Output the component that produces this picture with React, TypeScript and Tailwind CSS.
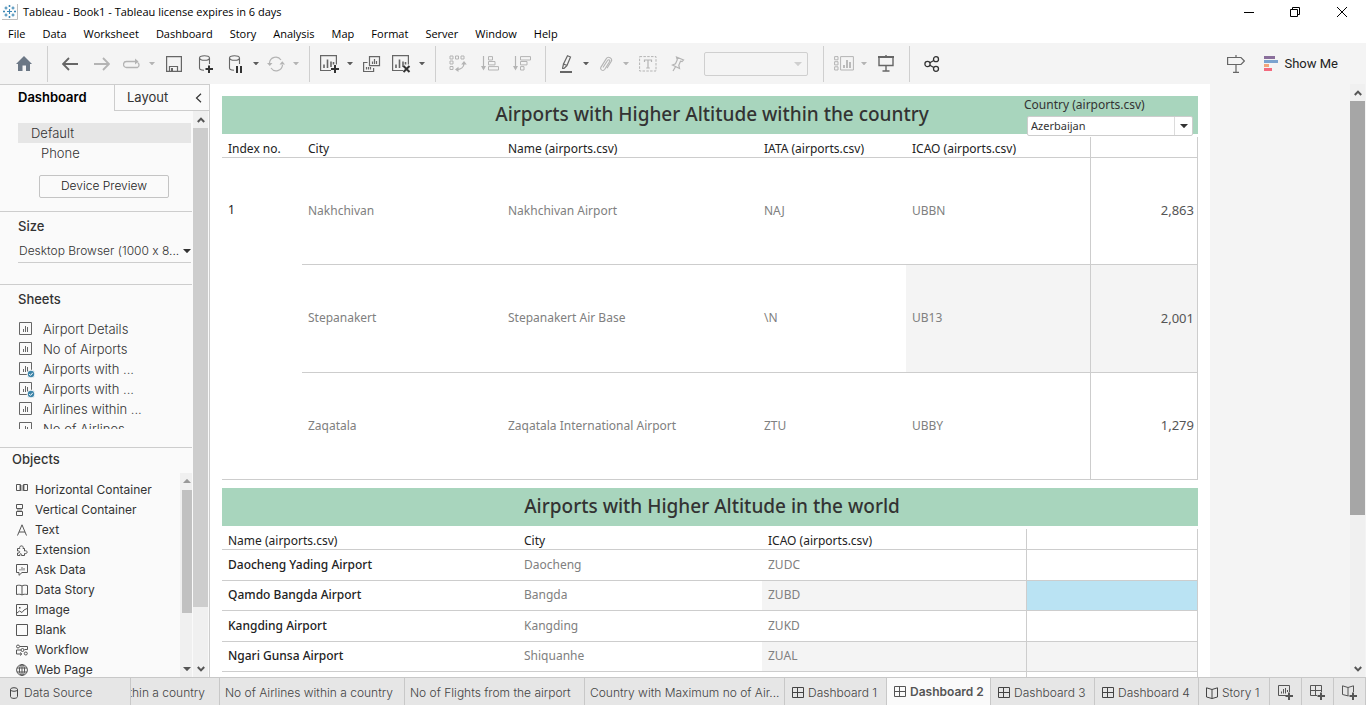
import React from "react";

const UI = "font-['Open_Sans','Noto_Sans',sans-serif]";

type IconProps = {
  w: number;
  h: number;
  children: React.ReactNode;
  className?: string;
};

function Svg({ w, h, children, className = "" }: IconProps) {
  return (
    <svg
      width={w}
      height={h}
      viewBox={`0 0 ${w} ${h}`}
      fill="none"
      stroke="currentColor"
      strokeWidth="1"
      aria-hidden="true"
      className={`shrink-0 ${className}`}
    >
      {children}
    </svg>
  );
}

/* ---------- small glyphs ---------- */

const Caret = () => (
  <Svg w={6} h={3}>
    <path d="M0 0h6L3 3.4z" fill="currentColor" stroke="none" />
  </Svg>
);

const WideCaret = () => (
  <Svg w={8} h={4}>
    <path d="M0 0h8L4 4.2z" fill="currentColor" stroke="none" />
  </Svg>
);

const Chevron = ({ down = false }: { down?: boolean }) => (
  <Svg w={8} h={6} className={down ? "rotate-180" : ""}>
    <path d="M.8 5 4 1.6 7.2 5" strokeWidth="2" />
  </Svg>
);

const TableauLogo = () => (
  <Svg w={16} h={16} className="text-[#3b87b5]">
    <path d="M0 0h16v16H0z" fill="#fdfdfd" stroke="none" />
    <path d="M15.5 0v15.5H0" stroke="#bdbdbd" />
    <path
      d="M7.5 5v5M5 7.5h5M4 2.5v3M2.5 4h3M11 2.5v3M9.5 4h3M4 9.5v3M2.5 11h3M11 9.5v3M9.5 11h3M7.5 1v2M6.5 2h2M7.5 12v2M6.5 13h2M1 7.5h2M2 6.5v2M12 7.5h2M13 6.5v2"
      strokeWidth="1.1"
    />
  </Svg>
);

const Home = () => (
  <Svg w={16} h={15} className="text-[#6b7785]">
    <path d="M8 0l8 8h-2v7h-4V9.500H6.500V15H2V8H0z" fill="currentColor" stroke="none" />
  </Svg>
);

const Arrow = ({ flip = false }: { flip?: boolean }) => (
  <Svg w={16} h={14} className={flip ? "-scale-x-100" : ""}>
    <path d="M1 7h15M7 1 1 7l6 6" strokeWidth="1.800" />
  </Svg>
);

const Replay = () => (
  <Svg w={18} h={12}>
    <path d="M9 9.500H3.500A2.800 2.800 0 0 1 3.500 3.500h9M14.500 4.500A2.800 2.800 0 0 1 14.500 9.500H8" strokeWidth="1.300" />
    <path d="M12 .5v6l3.500-3z" fill="currentColor" stroke="none" />
  </Svg>
);

const Save = () => (
  <Svg w={16} h={16}>
    <path d="M.6.6h14.800v14.800H.6zM3.500 15v-4.500h8V15" strokeWidth="1.200" />
    <path d="M5 12h2v3H5z" fill="currentColor" stroke="none" />
  </Svg>
);

const Database = ({ mark }: { mark: "plus" | "pause" }) => (
  <Svg w={16} h={18}>
    <ellipse cx="6.500" cy="3" rx="5" ry="2.300" strokeWidth="1.100" />
    <path d="M1.500 3v10c0 1.300 2 2.200 4.500 2.300M11.500 3v6" strokeWidth="1.100" />
    {mark === "plus" ? (
      <path d="M11 10.500v7.500M7.500 14H15" stroke="#333" strokeWidth="2" />
    ) : (
      <path d="M9 11v7M13 11v7" stroke="#333" strokeWidth="2" />
    )}
  </Svg>
);

const Refresh = () => (
  <Svg w={18} h={16}>
    <path d="M2.500 7A6.300 6.300 0 0 1 14 4M15.500 9A6.300 6.300 0 0 1 4 12" strokeWidth="1.200" />
    <path d="M0 7h5.500L2.800 10zM12.500 8.500H18l-2.700-3.200z" fill="currentColor" stroke="none" />
  </Svg>
);

const SheetMark = ({ mark }: { mark: "plus" | "cross" }) => (
  <Svg w={20} h={18}>
    <path d="M11 15.500H.6V.6h15.800v8.900" strokeWidth="1.200" />
    <path d="M4 13V9.500M7.500 13V4.500M11 12V6.500M13.500 9.500V7" strokeWidth="1.600" />
    {mark === "plus" ? (
      <path d="M15 10v8M11 14h8" stroke="#333" strokeWidth="2" />
    ) : (
      <path d="m11.500 11 6 6M17.500 11l-6 6" stroke="#333" strokeWidth="2" />
    )}
  </Svg>
);

const Duplicate = () => (
  <Svg w={18} h={16}>
    <path d="M6.500.6h10v9h-10zM4.500 6.500H.6v9h10V12" strokeWidth="1.200" />
    <path d="M9.500 8V5.500M11.500 8V3M13.500 8V5M3.500 13.500V11M5.500 13.500V11M7.500 13.500V11" strokeWidth="1.200" />
  </Svg>
);

const Swap = () => (
  <Svg w={18} h={17}>
    <path d="M1 1h3v3H1zM6.500 1h3v3h-3zM12 1h3v3h-3zM1 6h3v3H1zM1 11.500h3v3H1z" />
    <path d="M15 8c0 4-3 6.500-7.500 6.500" strokeWidth="1.300" />
    <path d="M12.200 9.500 15 6l2.800 3.500zM9.500 11.700 6 14.500l3.500 2.500z" fill="currentColor" stroke="none" />
  </Svg>
);

const Sort = ({ desc = false }: { desc?: boolean }) => (
  <Svg w={18} h={15}>
    <path d="M2.500 0v13" strokeWidth="1.200" />
    <path d="M0 10h5l-2.500 4.500z" fill="currentColor" stroke="none" />
    {desc ? (
      <path d="M7.500.6h10v3.400h-10zM7.500 5.500h6.500v3.400H7.500zM7.500 10.600h3.500V14H7.500z" />
    ) : (
      <path d="M7.500.6h4v3.400h-4zM7.500 5.500h6.500v3.400H7.500zM7.500 10.600h10V14h-10z" />
    )}
  </Svg>
);

const Highlighter = () => (
  <Svg w={12} h={18}>
    <path d="M7.500.800 10.500 2 7 10.500 3.500 9zM3.500 9 2.500 13.500M7 10.500 4 13.500H2" strokeWidth="1.200" />
    <path d="M0 17h12" strokeWidth="2" />
  </Svg>
);

const Clip = () => (
  <Svg w={14} h={16}>
    <path
      d="M4 11.500 8.500 4.500c1-1.500 3-.3 2 1.300L5.800 13.300c-1.600 2.400-5.300.5-3.800-2.200L7.300 2.600C9-.3 14 2.200 12.200 5.500L8 12.300"
      strokeWidth="1.100"
    />
  </Svg>
);

const TextMark = () => (
  <Svg w={18} h={16}>
    <path d="M.6.6h16.400v14.400H.6z" strokeDasharray="2.500 1.300" />
    <path d="M5.500 6V4h7v2M9 4v8M7.200 12h3.600" strokeWidth="1.200" />
  </Svg>
);

const Pin = () => (
  <Svg w={14} h={16}>
    <path d="M5.500 1 12.500 4l-1.500 1.500-1.500-.3-1.700 4 .7 3.300-7-3.500 3-1.200 1.800-4zM4.500 10.800 2 15" strokeWidth="1.200" />
  </Svg>
);

const Fit = () => (
  <Svg w={20} h={15}>
    <path d="M.6.6H4v3.200H.6zM.6 5.700H4v3.200H.6zM.6 10.800H4V14H.6zM6.600.6h12.800V14H6.600z" />
    <path d="M10 12V9M13 12V4M16 12V6" strokeWidth="1.800" />
  </Svg>
);

const Present = () => (
  <Svg w={18} h={17}>
    <path d="M1 2h16" strokeWidth="2" />
    <path d="M2 2v8.500h14V2M9 0v2M9 10.500V16M5.500 16h7" strokeWidth="1.400" />
  </Svg>
);

const Share = () => (
  <Svg w={16} h={16} className="text-[#333]">
    <circle cx="3.500" cy="8" r="2.600" strokeWidth="1.300" />
    <circle cx="12" cy="3.200" r="2.500" strokeWidth="1.300" />
    <circle cx="12" cy="12.800" r="2.500" strokeWidth="1.300" />
    <path d="m5.800 6.800 4-2.300M5.800 9.200l4 2.300" strokeWidth="1.300" />
  </Svg>
);

const Signpost = () => (
  <Svg w={18} h={18}>
    <path d="M.6 2.500h13.400L17.400 6 14 9.500H.6zM9 0v2.500M9 9.500V17.500M6 17.400h6" strokeWidth="1.200" />
  </Svg>
);

const ShowMeBars = () => (
  <Svg w={14} h={15}>
    <g stroke="none">
      <path d="M0 0h11v3H0z" fill="#8a6f9b" />
      <path d="M0 4h14v3H0z" fill="#7ba3cf" />
      <path d="M0 8h5v3H0z" fill="#f2a57a" />
      <path d="M0 12h8v3H0z" fill="#f36a7e" />
    </g>
  </Svg>
);

const SheetIcon = ({ used = false }: { used?: boolean }) => (
  <Svg w={17} h={17} className="text-[#666]">
    <path d="M1.500 1.500h12v12h-12z" />
    <path d="M5.500 11V8M7.500 11V5M9.500 11V6" />
    {used && (
      <g>
        <circle cx="13" cy="13" r="3.900" fill="#3d84a8" stroke="#fafafa" />
        <path d="m11.200 13 1.300 1.400 2.300-2.600" stroke="#fff" />
      </g>
    )}
  </Svg>
);

const GridIcon = () => (
  <Svg w={12} h={12}>
    <path d="M.5.5h11v10H.5zM5.500.5v10M.5 5.500h11" />
  </Svg>
);

const BookIcon = () => (
  <Svg w={12} h={12}>
    <path d="M.5.8 6 2.500 11.500.8V10L6 11.500.5 10zM6 2.500v9" />
  </Svg>
);

const AddSheet = () => (
  <Svg w={16} h={15}>
    <path d="M8 10.500H.5V.5h11V7M3.500 8.500V6.500M5.500 8.500V4M7.500 8.500V3M9.500 7V5" />
    <path d="M11 7.500V15M7.500 11H15" strokeWidth="2" />
  </Svg>
);

const AddDashboard = () => (
  <Svg w={16} h={15}>
    <path d="M7 10.500H.5V.5h11V7M5.500.5v10M.5 5.500h11" />
    <path d="M11 7.500V15M7.500 11H15" strokeWidth="2" />
  </Svg>
);

const AddStory = () => (
  <Svg w={16} h={15}>
    <path d="M6.500 11 .5 9.500V.8L6 2.500 11.500.8V7M6 2.500v8.500" />
    <path d="M11 7.500V15M7.500 11H15" strokeWidth="2" />
  </Svg>
);

/* ---------- title bar, menu, toolbar ---------- */

function TitleBar() {
  return (
    <header className={`flex h-[23px] shrink-0 items-center bg-white pl-0.5 text-[11px] text-black ${UI}`}>
      <TableauLogo />
      <h1 className="ml-[5px] flex-1 pt-px">Tableau - Book1 - Tableau license expires in 6 days</h1>
      <div className="flex h-5 text-black">
        <button aria-label="Minimize" className="flex w-[46px] items-center justify-center">
          <Svg w={10} h={10}>
            <path d="M0 5.500h10" />
          </Svg>
        </button>
        <button aria-label="Restore" className="flex w-[46px] items-center justify-center">
          <Svg w={10} h={10}>
            <path d="M.5 2.500h7v7h-7zM2.500 2.500v-2h7v7h-2" />
          </Svg>
        </button>
        <button aria-label="Close" className="flex w-12 items-center justify-center">
          <Svg w={10} h={10}>
            <path d="m0 0 10 10M10 0 0 10" />
          </Svg>
        </button>
      </div>
    </header>
  );
}

const menus = ["File", "Data", "Worksheet", "Dashboard", "Story", "Analysis", "Map", "Format", "Server", "Window", "Help"];

function MenuBar() {
  return (
    <nav className={`flex h-5 shrink-0 items-center gap-[17px] bg-white px-2 pt-0.5 text-[11px] text-black ${UI}`}>
      {menus.map((m) => (
        <button key={m}>{m}</button>
      ))}
    </nav>
  );
}

function Tool({ label, children, narrow = false, off = false }: { label: string; children: React.ReactNode; narrow?: boolean; off?: boolean }) {
  return (
    <button
      aria-label={label}
      className={`flex h-8 items-center justify-center ${narrow ? "w-7" : "w-8"} ${off ? "text-[#b4b4b4]" : "text-[#666]"}`}
    >
      {children}
    </button>
  );
}

function Drop({ label, off = false }: { label: string; off?: boolean }) {
  return (
    <button aria-label={label} className={`flex h-8 w-3 items-center justify-center ${off ? "text-[#b4b4b4]" : "text-[#5c5c5c]"}`}>
      <Caret />
    </button>
  );
}

function Group({ children, last = false }: { children: React.ReactNode; last?: boolean }) {
  return (
    <div className={`flex h-9 items-center pl-1.5 pr-[7px] ${last ? "" : "border-r border-[#cfcfcf]"}`}>{children}</div>
  );
}

function Toolbar() {
  return (
    <div role="toolbar" className="flex h-[41px] shrink-0 items-center bg-[#f4f4f4] pl-0.5">
      <Group>
        <Tool label="Start page"><Home /></Tool>
      </Group>
      <Group>
        <Tool label="Undo"><Arrow /></Tool>
        <Tool label="Redo" off><Arrow flip /></Tool>
        <Tool label="Replay" narrow off><Replay /></Tool>
        <Drop label="Replay options" off />
        <Tool label="Save"><Save /></Tool>
        <Tool label="New data source"><Database mark="plus" /></Tool>
        <Tool label="Pause updates" narrow><Database mark="pause" /></Tool>
        <Drop label="Pause options" />
        <Tool label="Run update" narrow off><Refresh /></Tool>
        <Drop label="Update options" off />
      </Group>
      <Group>
        <Tool label="New worksheet" narrow><SheetMark mark="plus" /></Tool>
        <Drop label="New sheet options" />
        <Tool label="Duplicate"><Duplicate /></Tool>
        <Tool label="Clear sheet" narrow><SheetMark mark="cross" /></Tool>
        <Drop label="Clear options" />
      </Group>
      <Group>
        <Tool label="Swap rows and columns" off><Swap /></Tool>
        <Tool label="Sort ascending" off><Sort /></Tool>
        <Tool label="Sort descending" off><Sort desc /></Tool>
      </Group>
      <Group>
        <Tool label="Highlight" narrow><Highlighter /></Tool>
        <Drop label="Highlight options" />
        <Tool label="Group members" narrow off><Clip /></Tool>
        <Drop label="Group options" off />
        <Tool label="Show mark labels" off><TextMark /></Tool>
        <Tool label="Fix axes" narrow off><Pin /></Tool>
        <div className="relative mx-2 ml-3 flex items-center">
          <select aria-label="Fit" disabled className="h-6 w-[104px] appearance-none rounded-xs border border-[#cfcfcf] bg-transparent" />
          <span className="pointer-events-none absolute right-1.5 text-[#cfcfcf]"><WideCaret /></span>
        </div>
      </Group>
      <Group>
        <Tool label="Show or hide cards" narrow off><Fit /></Tool>
        <Drop label="Card options" off />
        <Tool label="Presentation mode"><Present /></Tool>
      </Group>
      <Group last>
        <Tool label="Share workbook"><Share /></Tool>
      </Group>
      <div className="ml-auto flex items-center pr-7">
        <Tool label="Data guide"><Signpost /></Tool>
        <button className="ml-3 flex items-center gap-1.5 font-['Roboto',sans-serif] text-[13px] text-[#222]">
          <ShowMeBars />
          Show Me
        </button>
      </div>
    </div>
  );
}

/* ---------- side pane ---------- */

const sheets = [
  { name: "Airport Details", used: false },
  { name: "No of Airports", used: false },
  { name: "Airports with ...", used: true },
  { name: "Airports with ...", used: true },
  { name: "Airlines within ...", used: false },
  { name: "No of Airlines ...", used: false },
];

const objects: { name: string; icon: React.ReactNode }[] = [
  {
    name: "Horizontal Container",
    icon: (
      <>
        <path d="M3 1h6v6H3z" fill="#b8b8b8" stroke="none" />
        <path d="M.5.500h4v6h-4zM7.500.500h4v6h-4z" />
      </>
    ),
  },
  {
    name: "Vertical Container",
    icon: (
      <>
        <path d="M1 4h5v4H1z" fill="#b8b8b8" stroke="none" />
        <path d="M.5.5h6v4h-6zM.5 7.500h6v4h-6z" />
      </>
    ),
  },
  { name: "Text", icon: <path d="M1.500 11.500 6 .8l4.500 10.700M3 8h6" /> },
  {
    name: "Extension",
    icon: <path d="M1.500 4.500h2.300C2.500 1 8.500 1 7 4.500h1.500V7c3.500-1.300 3.500 3.500 0 2.500v2h-3C6 9 3.500 9 4 11.500H1.500V9H3c1.500-1 .5-2.500-1.500-2z" />,
  },
  {
    name: "Ask Data",
    icon: (
      <>
        <path d="M.5.5h11v8H6l-3 2.800V8.500H.5z" />
        <path d="M4 6.500V5M6 6.500V3M8 6.500V4" stroke="#999" strokeWidth="1.500" />
      </>
    ),
  },
  { name: "Data Story", icon: <path d="M.5 1.500C3 1 5 1.200 6 2c1-.8 3-1 5.500-.5v9C9 10 7 10.200 6 11c-1-.8-3-1-5.500-.5zM6 2v9" /> },
  {
    name: "Image",
    icon: (
      <>
        <path d="M.5.5h11v11H.5zM1 9l2.500-2L6 8.500 8 6l3-1.500" />
        <path d="M3 3h1.500v1.500H3z" fill="currentColor" stroke="none" />
      </>
    ),
  },
  { name: "Blank", icon: <path d="M.5.5h11v11H.5z" /> },
  {
    name: "Workflow",
    icon: (
      <>
        <circle cx="2" cy="2.500" r="1.500" />
        <circle cx="6.500" cy="6" r="1.500" />
        <circle cx="9.800" cy="9.500" r="1.500" />
        <path d="M4 2.500h7.500v3H8.500M5 6H.5v4h5M4 8.500 5.800 10 4 11.500" />
      </>
    ),
  },
  {
    name: "Web Page",
    icon: (
      <>
        <circle cx="6" cy="6" r="5.400" />
        <ellipse cx="6" cy="6" rx="2.600" ry="5.400" />
        <path d="M6 .5v11M1 4h10M1 8h10" />
      </>
    ),
  },
];

function SidePane() {
  return (
    <aside className="flex w-[210px] shrink-0 flex-col border-r border-t border-[#cdcdcd] bg-[#fafafa] font-['Inter',sans-serif] text-[12px] text-[#333] [font-variant-ligatures:none]">
      <div role="tablist" className="flex h-[26px] shrink-0">
        <button role="tab" aria-selected="true" className="w-[114px] pl-[18px] text-left text-[13px] font-semibold text-black">
          Dashboard
        </button>
        <div className="flex flex-1 items-center justify-between border-b border-l border-[#cdcdcd] pl-3 pr-[7px]">
          <button role="tab" aria-selected="false" className="text-[13px]">Layout</button>
          <button aria-label="Collapse pane">
            <Svg w={7} h={10}>
              <path d="M6 .8 1.500 5 6 9.200" strokeWidth="1.200" />
            </Svg>
          </button>
        </div>
      </div>
      <div className="flex min-h-0 flex-1">
        <div className="flex min-w-0 flex-1 flex-col">
          <section className="border-b border-[#cdcdcd] pb-[13px] pl-[18px] pt-3">
            <ul className="text-[13px] font-light leading-5">
              <li className="mr-px bg-[#e6e6e6] pl-[13px]">Default</li>
              <li className="pl-[23px]">Phone</li>
            </ul>
            <button className="ml-[21px] mt-3 block h-[23px] w-[130px] rounded-xs border border-[#c4c4c4] pb-px font-light text-[#222]">
              Device Preview
            </button>
          </section>
          <section className="border-b border-[#cdcdcd] pb-[21px] pl-[18px] pt-[3px]">
            <h2 className="text-[13px] font-medium leading-[22px]">Size</h2>
            <button className="mt-[3px] flex h-[23px] items-center whitespace-nowrap border-b border-[#cdcdcd] pl-px font-light">
              <span className="w-[164px] text-left">Desktop Browser (1000 x 8...</span>
              <WideCaret />
            </button>
          </section>
          <section className="border-b border-[#cdcdcd] pb-[18px] pt-[3px]">
            <h2 className="pl-[18px] text-[13px] font-medium leading-[22px]">Sheets</h2>
            <ul className="mt-[9px] h-[110px] overflow-hidden text-[13px] font-light leading-5">
              {sheets.map((s, i) => (
                <li key={i} className="flex items-center gap-2 pl-[18px]">
                  <SheetIcon used={s.used} />
                  {s.name}
                </li>
              ))}
            </ul>
          </section>
          <section className="flex min-h-0 flex-1 flex-col">
            <h2 className="pb-0.5 pl-3 text-[13px] font-medium leading-[23px]">Objects</h2>
            <div className="flex min-h-0 flex-1">
              <ul className="flex-1 overflow-hidden whitespace-nowrap pt-[7px] leading-5">
                {objects.map((o) => (
                  <li key={o.name} className="flex items-center gap-[7px] pl-4">
                    <Svg w={12} h={12} className="text-[#555]">{o.icon}</Svg>
                    {o.name}
                  </li>
                ))}
              </ul>
              <div className="flex w-3 flex-col items-end bg-[#f0f0f0] text-[#555]">
                <span className="flex h-[17px] w-2.5 rotate-180 items-center justify-center text-[#999]"><WideCaret /></span>
                <span className="h-[123px] w-2.5 bg-[#c1c1c1]" />
                <span className="mt-auto flex h-4 w-2.5 items-center justify-center"><WideCaret /></span>
              </div>
            </div>
          </section>
        </div>
        <ScrollBar tone="bg-[#cdcdcd]" size="h-[90%]" />
      </div>
    </aside>
  );
}

function ScrollBar({ tone, size }: { tone: string; size: string }) {
  return (
    <div className="mx-px flex w-[15px] shrink-0 flex-col bg-[#f0f0f0] text-[#555]">
      <span className="flex h-[17px] shrink-0 items-center justify-center pt-px"><Chevron /></span>
      <div className="min-h-0 flex-1">
        <div className={`${tone} ${size}`} />
      </div>
      <span className="flex h-[17px] shrink-0 items-center justify-center"><Chevron down /></span>
    </div>
  );
}

/* ---------- dashboard canvas ---------- */

const Banner = ({ children }: { children: React.ReactNode }) => (
  <h2 className="flex h-[38px] items-center justify-center bg-[#a8d5bd] pb-px pl-1 text-[19px] font-medium text-[#333]">{children}</h2>
);

const countryRows = [
  ["Nakhchivan", "Nakhchivan Airport", "NAJ", "UBBN", "2,863"],
  ["Stepanakert", "Stepanakert Air Base", "\\N", "UB13", "2,001"],
  ["Zaqatala", "Zaqatala International Airport", "ZTU", "UBBY", "1,279"],
];

const worldRows = [
  ["Daocheng Yading Airport", "Daocheng", "ZUDC"],
  ["Qamdo Bangda Airport", "Bangda", "ZUBD"],
  ["Kangding Airport", "Kangding", "ZUKD"],
  ["Ngari Gunsa Airport", "Shiquanhe", "ZUAL"],
];

function CountryTable() {
  const head = "border-b border-[#cdcdcd] pl-1.5 pt-[3px] text-left font-normal";
  const cell = "border-b border-[#cdcdcd] pl-1.5 text-[#808080]";
  return (
    <table className="mt-[3px] h-[343px] w-full table-fixed border-separate border-spacing-0 text-[12px] text-[#222]">
      <colgroup>
        <col className="w-20" />
        <col className="w-[200px]" />
        <col className="w-64" />
        <col className="w-[148px]" />
        <col className="w-[185px]" />
        <col />
      </colgroup>
      <thead>
        <tr className="h-[21px] leading-[17px]">
          <th className={head}>Index no.</th>
          <th className={head}>City</th>
          <th className={head}>Name (airports.csv)</th>
          <th className={head}>IATA (airports.csv)</th>
          <th className={`${head} border-r`}>ICAO (airports.csv)</th>
          <th className={`${head} border-r`} aria-label="Altitude" />
        </tr>
      </thead>
      <tbody>
        {countryRows.map((r, i) => {
          const shade = i === 1 ? "bg-[#f4f4f4]" : "";
          return (
            <tr key={r[0]}>
              {i === 0 && (
                <td rowSpan={3} className="border-b border-[#cdcdcd] pl-1.5 pt-[43px] align-top">
                  1
                </td>
              )}
              <td className={cell}>{r[0]}</td>
              <td className={cell}>{r[1]}</td>
              <td className={cell}>{r[2]}</td>
              <td className={`${cell} border-r ${shade}`}>{r[3]}</td>
              <td className={`border-b border-r border-[#cdcdcd] pr-[3px] text-right text-[13px] text-[#555] ${shade}`}>{r[4]}</td>
            </tr>
          );
        })}
      </tbody>
    </table>
  );
}

function WorldTable() {
  const head = "border-b border-[#cdcdcd] pl-1.5 pt-[3px] text-left font-normal";
  const cell = "border-b border-[#cdcdcd] pl-1.5";
  return (
    <table className="mt-[3px] h-[143px] w-full table-fixed border-separate border-spacing-0 text-[12px] text-[#222]">
      <colgroup>
        <col className="w-[296px]" />
        <col className="w-[244px]" />
        <col className="w-[265px]" />
        <col />
      </colgroup>
      <thead>
        <tr className="h-[21px] leading-[17px]">
          <th className={head}>Name (airports.csv)</th>
          <th className={head}>City</th>
          <th className={`${head} border-r`}>ICAO (airports.csv)</th>
          <th className={`${head} border-r`} aria-label="Altitude" />
        </tr>
      </thead>
      <tbody>
        {worldRows.map((r, i) => {
          const shade = i % 2 === 1 ? "bg-[#f4f4f4]" : "";
          return (
            <tr key={r[0]}>
              <td className={`${cell} font-medium`}>{r[0]}</td>
              <td className={`${cell} text-[#808080]`}>{r[1]}</td>
              <td className={`${cell} border-r text-[#808080] ${shade}`}>{r[2]}</td>
              <td className={`${cell} border-r ${i === 1 ? "bg-[#bae3f3]" : shade}`} />
            </tr>
          );
        })}
      </tbody>
    </table>
  );
}

function Canvas() {
  return (
    <main className="flex min-w-0 flex-1 bg-[#f4f4f4]">
      <div className="flex w-[1000px] shrink-0 flex-col overflow-hidden bg-white px-3 pt-3 font-['Noto_Sans',sans-serif]">
        <div className="relative">
          <Banner>Airports with Higher Altitude within the country</Banner>
          <div className="absolute right-[5px] top-0 w-[169px] text-[12px] text-[#333]">
            <label htmlFor="country" className="block leading-[18px]">Country (airports.csv)</label>
            <div className="relative ml-[3px] mt-0.5">
              <select id="country" className="block h-5 w-full appearance-none rounded-xs border border-[#cdcdcd] bg-white pl-[3px] text-[11px]">
                <option>Azerbaijan</option>
              </select>
              <span className="pointer-events-none absolute inset-y-px right-px flex w-[18px] items-center justify-center border-l border-[#dcdcdc]">
                <WideCaret />
              </span>
            </div>
          </div>
        </div>
        <CountryTable />
        <div className="mt-2">
          <Banner>Airports with Higher Altitude in the world</Banner>
        </div>
        <WorldTable />
        <div className="flex flex-1 justify-end">
          <div className="w-[172px] border-x border-[#cdcdcd]" />
        </div>
      </div>
      <div className="ml-auto flex">
        <ScrollBar tone="bg-[#a6a6a6]" size="h-[74%]" />
      </div>
    </main>
  );
}

/* ---------- sheet tabs ---------- */

const tabs: { name: string; width: string; icon?: React.ReactNode; active?: boolean; clipped?: boolean }[] = [
  { name: "thin a country", width: "w-[89px]", clipped: true },
  { name: "No of Airlines within a country", width: "w-[185px]" },
  { name: "No of Flights from the airport", width: "w-[180px]" },
  { name: "Country with Maximum no of Air...", width: "w-[200px]" },
  { name: "Dashboard 1", width: "w-[102px]", icon: <GridIcon /> },
  { name: "Dashboard 2", width: "w-[104px]", icon: <GridIcon />, active: true },
  { name: "Dashboard 3", width: "w-[104px]", icon: <GridIcon /> },
  { name: "Dashboard 4", width: "w-[104px]", icon: <GridIcon /> },
  { name: "Story 1", width: "w-[71px]", icon: <BookIcon /> },
];

function SheetTabs() {
  const add = "flex w-8 shrink-0 items-center justify-center border-r border-[#c8c8c8] pt-0.5 text-[#555]";
  return (
    <footer className="flex h-7 shrink-0 border-t border-[#c8c8c8] bg-[#e6e6e6] font-['Inter',sans-serif] text-[12px] font-light text-[#444]">
      <button className="flex w-[131px] shrink-0 items-center gap-1.5 border-r border-[#c8c8c8] pl-2.5 pt-0.5">
        <Svg w={8} h={12}>
          <ellipse cx="4" cy="2.500" rx="3.500" ry="1.800" />
          <path d="M.5 2.500v7c0 2.500 7 2.500 7 0v-7" />
        </Svg>
        Data Source
      </button>
      {tabs.map((t) => (
        <button
          key={t.name}
          className={`flex shrink-0 items-center gap-1 overflow-hidden whitespace-nowrap border-r border-[#c8c8c8] ${t.width} ${
            t.clipped ? "justify-end pr-3.5" : t.icon ? "pl-[7px]" : "pl-[5px]"
          } ${t.active ? "bg-[#fafafa] font-semibold text-[#555]" : "pt-0.5"}`}
        >
          {t.icon}
          {t.name}
        </button>
      ))}
      <button aria-label="New worksheet tab" className={add}><AddSheet /></button>
      <button aria-label="New dashboard tab" className={add}><AddDashboard /></button>
      <button aria-label="New story tab" className={add}><AddStory /></button>
    </footer>
  );
}

export default function App() {
  return (
    <div className="flex h-screen flex-col overflow-hidden bg-white">
      <TitleBar />
      <MenuBar />
      <Toolbar />
      <div className="flex min-h-0 flex-1">
        <SidePane />
        <Canvas />
      </div>
      <SheetTabs />
    </div>
  );
}
